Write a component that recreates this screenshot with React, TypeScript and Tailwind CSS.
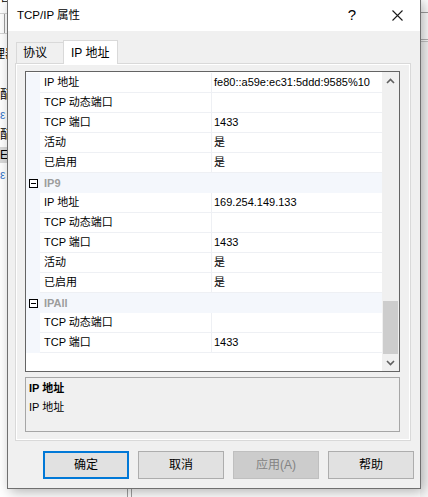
type Row =
  | { kind: "cat"; name: string }
  | { kind: "prop"; name: string; value?: string };

const rows: Row[] = [
  { kind: "prop", name: "IP 地址", value: "fe80::a59e:ec31:5ddd:9585%10" },
  { kind: "prop", name: "TCP 动态端口" },
  { kind: "prop", name: "TCP 端口", value: "1433" },
  { kind: "prop", name: "活动", value: "是" },
  { kind: "prop", name: "已启用", value: "是" },
  { kind: "cat", name: "IP9" },
  { kind: "prop", name: "IP 地址", value: "169.254.149.133" },
  { kind: "prop", name: "TCP 动态端口" },
  { kind: "prop", name: "TCP 端口", value: "1433" },
  { kind: "prop", name: "活动", value: "是" },
  { kind: "prop", name: "已启用", value: "是" },
  { kind: "cat", name: "IPAll" },
  { kind: "prop", name: "TCP 动态端口" },
  { kind: "prop", name: "TCP 端口", value: "1433" },
];

function MinusBox() {
  return (
    <div className="flex h-[9px] w-[9px] items-center justify-center border border-black bg-white">
      <div className="h-px w-[5px] bg-black" />
    </div>
  );
}

function Chevron({ up }: { up?: boolean }) {
  return (
    <svg width="9" height="6" viewBox="0 0 9 6">
      <polyline
        points={up ? "1,5 4.5,1.5 8,5" : "1,1 4.5,4.5 8,1"}
        fill="none"
        stroke="#606060"
        strokeWidth="1.6"
      />
    </svg>
  );
}

function PropertyGrid() {
  return (
    <div className="flex h-[301px] w-[375px] border border-[#646464] bg-white text-[11px]">
      <div className="flex flex-1 flex-col pt-px">
        {rows.map((r, i) =>
          r.kind === "cat" ? (
            <div key={i} className="flex h-[20px] items-center bg-[#f4f7fc]">
              <div className="flex w-[14px] justify-center pl-[1px]">
                <MinusBox />
              </div>
              <div className="pl-[4px] font-bold text-[#9d9d9d]">{r.name}</div>
            </div>
          ) : (
            <div key={i} className="flex h-[20px]">
              <div className="w-[14px] bg-[#f4f7fc]" />
              <div className="flex flex-1 border-b border-[#eef0f4]">
                <div className="flex w-[171px] items-center pl-[4px]">{r.name}</div>
                <div className="flex flex-1 items-center border-l border-[#eef0f4] pl-[2px]">
                  {r.value}
                </div>
              </div>
            </div>
          ),
        )}
      </div>
      <div className="flex w-[17px] flex-col bg-[#f0f0f0]">
        <div className="flex h-[17px] items-center justify-center">
          <Chevron up />
        </div>
        <div className="flex flex-1 flex-col justify-end px-px">
          <div className="h-[53px] bg-[#cdcdcd]" />
        </div>
        <div className="flex h-[17px] items-center justify-center">
          <Chevron />
        </div>
      </div>
    </div>
  );
}

function Button({
  label,
  primary,
  disabled,
}: {
  label: string;
  primary?: boolean;
  disabled?: boolean;
}) {
  const cls = primary
    ? "border-2 border-[#0078d7] bg-[#e1e1e1] text-black"
    : disabled
      ? "border border-[#bfbfbf] bg-[#cccccc] text-[#838383]"
      : "border border-[#adadad] bg-[#e1e1e1] text-black";
  return (
    <div className={`flex h-[28px] w-[86px] items-center justify-center ${cls}`}>
      {label}
    </div>
  );
}

function Dialog() {
  return (
    <div className="absolute left-[7px] top-[-1px] flex h-[490px] w-[414px] flex-col border border-[#6f6f6f] bg-[#f0f0f0] shadow-[3px_3px_12px_rgba(0,0,0,0.3)]">
      {/* title bar */}
      <div className="flex h-[31px] items-center bg-white">
        <div className="pl-[9px] text-[11.5px]">TCP/IP 属性</div>
        <div className="ml-auto flex h-full w-[46px] items-center justify-center text-[15px]">
          ?
        </div>
        <div className="flex h-full w-[45px] items-center justify-center">
          <svg width="11" height="11" viewBox="0 0 11 11">
            <path d="M0.5 0.5 L10.5 10.5 M10.5 0.5 L0.5 10.5" stroke="#1a1a1a" strokeWidth="1.1" />
          </svg>
        </div>
      </div>

      {/* body */}
      <div className="flex flex-1 flex-col pt-[9px]">
        <div className="flex h-[23px] items-end pl-[8px]">
          <div className="flex h-[21px] w-[47px] items-center border-l border-t border-[#d9d9d9] pl-[6px]">
            协议
          </div>
          <div className="relative z-10 -mb-px flex h-[24px] w-[55px] items-center border-x border-t border-[#d9d9d9] bg-white pl-[7px]">
            IP 地址
          </div>
        </div>

        <div className="ml-[7px] h-[378px] w-[396px] border border-[#d9d9d9]">
          <div className="flex h-full flex-col border border-white pl-[8px] pt-[6px]">
            <PropertyGrid />
            <div className="mt-[5px] flex h-[55px] w-[375px] flex-col border border-[#a6a6a6] pl-[3px] pt-px text-[11px]">
              <div className="font-bold leading-[18px]">IP 地址</div>
              <div className="mt-px leading-[18px]">IP 地址</div>
            </div>
          </div>
        </div>

        <div className="mt-[10px] flex gap-[9px] pl-[35px]">
          <Button label="确定" primary />
          <Button label="取消" />
          <Button label="应用(A)" disabled />
          <Button label="帮助" />
        </div>
      </div>
    </div>
  );
}

export default function App() {
  return (
    <div className="relative h-[497px] w-[428px] overflow-hidden bg-white font-['Liberation_Sans','Noto_Sans_CJK_SC',sans-serif] text-[12px] text-black">
      {/* window behind the dialog */}
      <div className="flex h-full">
        <div className="flex w-[8px] flex-col overflow-hidden">
          <div className="h-[13px] overflow-hidden leading-[13px]">
            <div className="-ml-[1px] -mt-[9px]">看</div>
          </div>
          <div className="flex h-[21px] border-y border-[#d4d4d4]">
            <div className="w-[5px] border-r border-[#a0a0a0]" />
          </div>
          <div className="-ml-[7px] mt-[10px] h-[20px] whitespace-nowrap leading-[20px]">理器</div>
          <div className="mt-[21px] h-[20px] whitespace-nowrap leading-[20px]">配</div>
          <div className="h-[20px] whitespace-nowrap leading-[20px] text-[#3c78c8]">ε</div>
          <div className="h-[20px] whitespace-nowrap leading-[20px]">配</div>
          <div className="my-[2px] h-[16px] whitespace-nowrap bg-[#d9d9d9] leading-[16px]">E|</div>
          <div className="h-[20px] whitespace-nowrap leading-[20px] text-[#3c78c8]">ε</div>
        </div>
        <div className="flex-1" />
        <div className="flex w-[8px] flex-col">
          <div className="h-[13px] border-b border-[#a0a0a0]" />
          <div className="h-[27px] border-b border-[#b4b4b4]" />
          <div className="h-[2px] border-b border-[#c8c8c8]" />
          <div className="flex-1 bg-[#f7f7f7]" />
        </div>
      </div>
      <div className="absolute bottom-0 left-[127px] flex h-[9px] gap-[3px]">
        <div className="w-px bg-[#a0a0a0]" />
        <div className="w-px bg-[#a0a0a0]" />
      </div>
      <Dialog />
    </div>
  );
}
